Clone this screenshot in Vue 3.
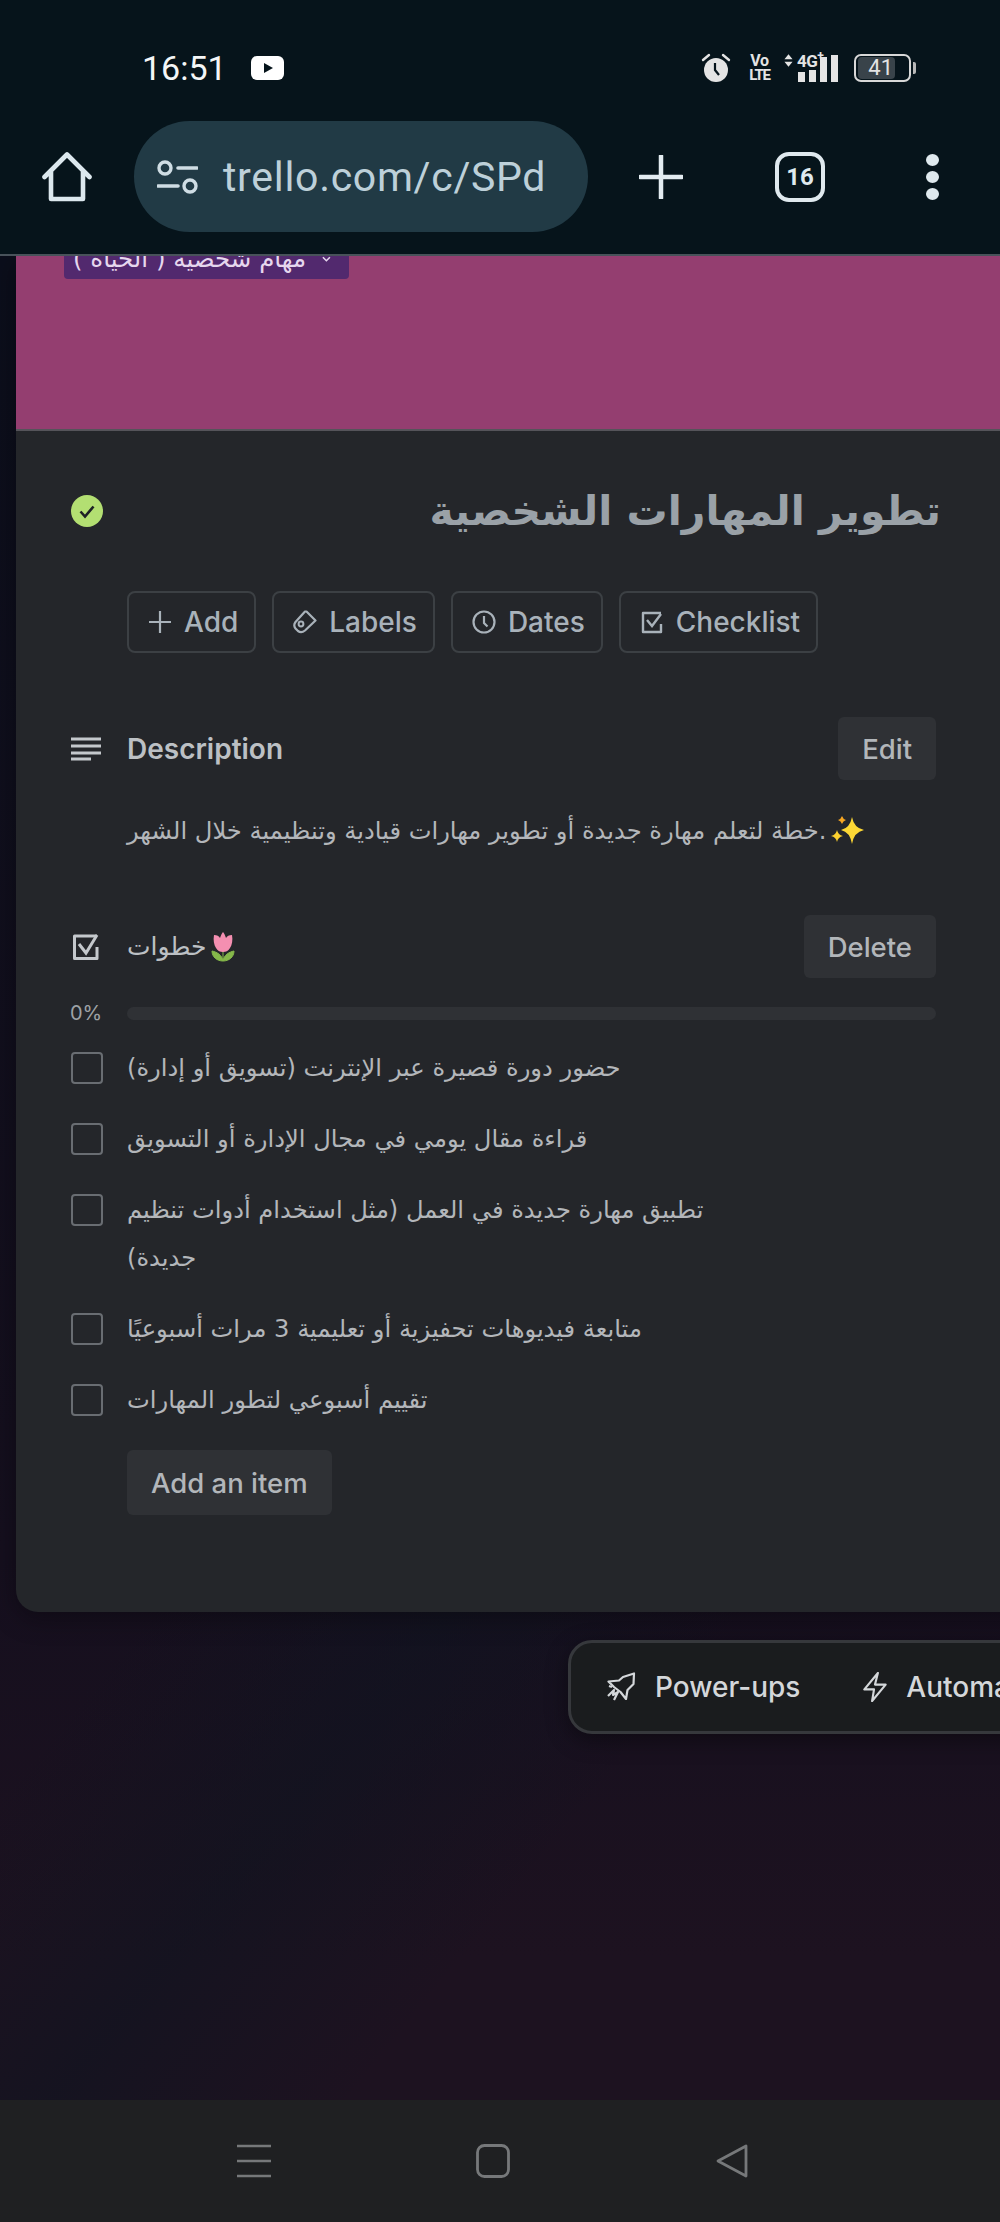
<script setup>
const actions = [
  { label: "Add", icon: "plus" },
  { label: "Labels", icon: "tag" },
  { label: "Dates", icon: "clock" },
  { label: "Checklist", icon: "check" },
];

const items = [
  "حضور دورة قصيرة عبر الإنترنت (تسويق أو إدارة)",
  "قراءة مقال يومي في مجال الإدارة أو التسويق",
  "تطبيق مهارة جديدة في العمل (مثل استخدام أدوات تنظيم جديدة)",
  "متابعة فيديوهات تحفيزية أو تعليمية 3 مرات أسبوعيًا",
  "تقييم أسبوعي لتطور المهارات",
];
</script>

<template>
  <div class="screen">
    <header class="chrome">
      <div class="status">
        <span class="time">16:51</span>
        <svg class="yt" viewBox="0 0 33 24"><rect width="33" height="24" rx="6" fill="#fff" /><path d="M13 7l9 5-9 5z" fill="#06141b" /></svg>
        <div class="status-right">
          <svg class="alarm" viewBox="0 0 30 30">
            <circle cx="15" cy="17" r="12" fill="#e4e4e4" />
            <path d="M14 10v7l4 5" fill="none" stroke="#06141b" stroke-width="2.200" />
            <path d="M2 7l6-5M28 7l-6-5" stroke="#e4e4e4" stroke-width="2.400" stroke-linecap="round" />
          </svg>
          <div class="volte"><span>Vo</span><span>LTE</span></div>
          <div class="signal">
            <svg class="updown" viewBox="0 0 10 14"><path d="M5 0l4.500 5.500h-9zM5 14L.5 8.500h9z" fill="#e4e4e4" /></svg>
            <span class="net">4G<sup>+</sup></span>
            <div class="bars"><i class="b1"></i><i class="b2"></i><i class="b3"></i><i class="b4"></i></div>
          </div>
          <div class="battery"><span class="level">41</span></div>
          <i class="nub"></i>
        </div>
      </div>
      <div class="toolbar">
        <svg class="home" viewBox="0 0 50 50"><path d="M2.500 25L25 2.500 47.500 25M9 19v28h32V19" fill="none" stroke="#dce8ee" stroke-width="4.600" stroke-linejoin="round" stroke-linecap="round" /></svg>
        <div class="url">
          <svg class="tune" viewBox="0 0 41 34">
            <circle cx="8" cy="8" r="6" fill="none" stroke="#cfdde4" stroke-width="3.400" />
            <path d="M21 8h19M1 26h20" stroke="#cfdde4" stroke-width="3.600" stroke-linecap="round" />
            <circle cx="33" cy="26" r="6" fill="none" stroke="#cfdde4" stroke-width="3.400" />
          </svg>
          <span class="url-text">trello.com/c/SPd</span>
        </div>
        <svg class="plus" viewBox="0 0 44 44"><path d="M22 1v42M1 22h42" stroke="#e3ecf1" stroke-width="4.500" stroke-linecap="round" /></svg>
        <div class="tabs">16</div>
        <div class="dots"><i></i><i></i><i></i></div>
      </div>
    </header>

    <main class="page">
      <div class="card">
        <div class="cover">
          <div class="label">
            <span dir="rtl">مهام شخصية ( الحياة )</span>
            <svg class="chev" viewBox="0 0 10 6"><path d="M1 1l4 4 4-4" fill="none" stroke="#e6d7ee" stroke-width="1.800" /></svg>
          </div>
        </div>
        <div class="body">
          <div class="title-row">
            <span class="done">
              <svg viewBox="0 0 32 32"><circle cx="16" cy="16" r="16" fill="#b3df72" /><path d="M9.500 16.500l4.500 5 8.500-10" fill="none" stroke="#1d2125" stroke-width="2.600" /></svg>
            </span>
            <h1 class="title" dir="rtl">تطوير المهارات الشخصية</h1>
          </div>

          <div class="actions">
            <button v-for="a in actions" :key="a.label" class="action">
              <svg v-if="a.icon === 'plus'" class="ai" viewBox="0 0 24 24"><path d="M12 1v22M1 12h22" stroke="#a9b2ba" stroke-width="2.200" /></svg>
              <svg v-else-if="a.icon === 'tag'" class="ai" viewBox="0 0 24 24"><path d="M12 1.500h1.500l9 9L12 20.500c-2.500 2-5 2-7 .5l-2.500-2.500c-1.500-2-1.500-4.500 0-6.500z" fill="none" stroke="#a9b2ba" stroke-width="2.200" stroke-linejoin="round" /><circle cx="8" cy="14" r="2.400" fill="none" stroke="#a9b2ba" stroke-width="2" /></svg>
              <svg v-else-if="a.icon === 'clock'" class="ai" viewBox="0 0 24 24"><circle cx="12" cy="12" r="10.500" fill="none" stroke="#a9b2ba" stroke-width="2.200" /><path d="M12 6v7l3.500 3.500" fill="none" stroke="#a9b2ba" stroke-width="2.200" /></svg>
              <svg v-else class="ai" viewBox="0 0 24 24"><path d="M21 3H3v19h18v-8" fill="none" stroke="#a9b2ba" stroke-width="2.400" stroke-linejoin="round" /><path d="M7 10l5 6 9-12" fill="none" stroke="#a9b2ba" stroke-width="2.400" /></svg>
              <span>{{ a.label }}</span>
            </button>
          </div>

          <div class="head desc-head">
            <svg class="side-icon lines" viewBox="0 0 30 24"><path d="M0 2h30M0 9h30M0 16h30M0 22h20" stroke="#c4c8cc" stroke-width="3.200" /></svg>
            <h2>Description</h2>
            <button class="soft">Edit</button>
          </div>
          <div class="desc">
            <span>خطة لتعلم مهارة جديدة أو تطوير مهارات قيادية وتنظيمية خلال الشهر</span><span class="dot">.</span>
            <svg class="spark" viewBox="0 0 33 30">
              <path d="M21 1Q23 12 33 14 23 16 21 28 19 16 10 14 19 12 21 1z" fill="#fdd835" />
              <path d="M6 14Q7 19 12 20 7 21 6 26 5 21 0 20 5 19 6 14z" fill="#fbd02f" />
              <path d="M11 0Q12 3 15 4 12 5 11 8 10 5 7 4 10 3 11 0z" fill="#f6a623" />
            </svg>
          </div>

          <div class="head check-head">
            <svg class="side-icon" viewBox="0 0 28 28"><path d="M25 3H2.500v22.500H25V14" fill="none" stroke="#c4c8cc" stroke-width="3" stroke-linejoin="round" /><path d="M7 11l7 9 11-18" fill="none" stroke="#c4c8cc" stroke-width="3" /></svg>
            <h2 class="check-title">
              <span>خطوات</span>
              <svg class="tulip" viewBox="0 0 24 30">
                <path d="M12 18v11M12 29C11 23 6 20 1 19c0 6 5 10 11 10zM12 29c1-6 6-9 11-10 0 6-5 10-11 10z" fill="#86b84a" stroke="#86b84a" stroke-width="1" />
                <path d="M3 3c3 0 5 1 6 3 1-3 2-5 3-6 1 1 2 3 3 6 1-2 3-3 6-3 1 5 0 10-2 13-2 3-4 4-7 4s-5-1-7-4C3 13 2 8 3 3z" fill="#f48fb1" />
              </svg>
            </h2>
            <button class="soft">Delete</button>
          </div>

          <div class="progress">
            <span class="pct">0%</span>
            <div class="track"></div>
          </div>

          <ul class="items">
            <li v-for="item in items" :key="item" class="item">
              <span class="box"></span>
              <span class="item-text">{{ item }}</span>
            </li>
          </ul>

          <button class="soft add-item">Add an item</button>
        </div>
      </div>

      <div class="dock">
        <svg class="dock-icon" viewBox="0 0 30 30">
          <path d="M16 5L27 1.500 26.500 12l-6 6-1.500 9-5.500-7L7 15 1.500 9.500 12 8.500z" fill="none" stroke="#d4d7da" stroke-width="2.200" stroke-linejoin="round" />
          <path d="M1 24l6-6-1 5 5-3-4 8M2 14l3 1" fill="none" stroke="#d4d7da" stroke-width="2.200" stroke-linejoin="round" />
        </svg>
        <span class="dock-text">Power-ups</span>
        <svg class="dock-icon bolt" viewBox="0 0 26 31"><path d="M16 1L2 18h10l-2 12 14-17H13z" fill="none" stroke="#d4d7da" stroke-width="2.200" stroke-linejoin="round" /></svg>
        <span class="dock-text">Automation</span>
      </div>
    </main>

    <footer class="nav">
      <svg class="nav-icon" viewBox="0 0 34 34"><path d="M0 2h34M0 17h34M0 32h34" stroke="#76787a" stroke-width="2.600" /></svg>
      <svg class="nav-icon" viewBox="0 0 34 34"><rect x="1.500" y="1.500" width="31" height="31" rx="7" fill="none" stroke="#76787a" stroke-width="2.800" /></svg>
      <svg class="nav-icon" viewBox="0 0 34 34"><path d="M31 2v30L3 17z" fill="none" stroke="#76787a" stroke-width="2.800" stroke-linejoin="round" /></svg>
    </footer>
  </div>
</template>

<style>
html,
body {
  margin: 0;
  background: #1d1220;
}
</style>

<style scoped>
.screen {
  width: 1000px;
  height: 2222px;
  display: flex;
  flex-direction: column;
  overflow: hidden;
  font-family: Inter, "DejaVu Sans", sans-serif;
  color: #b6bcc2;
}
.chrome {
  flex: none;
  height: 254px;
  background: #06141b;
  border-bottom: 2px solid #48525a;
}
.status {
  display: flex;
  align-items: center;
  height: 32px;
  padding: 52px 0 0 142px;
}
.time {
  font: 400 34px Roboto, sans-serif;
  color: #f4f6f7;
}
.yt {
  width: 33px;
  height: 24px;
  margin-left: 24px;
}
.status-right {
  margin-left: auto;
  display: flex;
  align-items: center;
  padding-right: 84px;
  color: #e4e4e4;
}
.alarm {
  width: 30px;
  height: 30px;
}
.volte {
  display: flex;
  flex-direction: column;
  align-items: center;
  width: 21px;
  margin-left: 18px;
  font: 700 15px/14px Roboto, sans-serif;
  letter-spacing: -1.2px;
}
.volte span:first-child {
  font-size: 16px;
  letter-spacing: -0.3px;
}
.signal {
  display: flex;
  align-items: flex-start;
  position: relative;
  width: 56px;
  height: 28px;
  margin-left: 14px;
}
.updown {
  width: 9px;
  height: 13px;
}
.net {
  font: 700 17px/15px Roboto, sans-serif;
  letter-spacing: -0.5px;
  margin-left: 4px;
}
.net sup {
  font-size: 12px;
  line-height: 0;
}
.bars {
  position: absolute;
  right: 2px;
  bottom: 0;
  display: flex;
  align-items: flex-end;
  gap: 4px;
}
.bars i {
  display: block;
  width: 7px;
  background: #e4e4e4;
}
.b1 { height: 10px; }
.b2 { height: 12px; }
.b3 { height: 25px; }
.b4 { height: 27px; }
.battery {
  width: 49px;
  height: 22px;
  margin-left: 14px;
  border: 2px solid #d8d8d8;
  border-radius: 7px;
  padding: 1px 2px;
}
.level {
  display: block;
  width: 37px;
  height: 22px;
  box-sizing: border-box;
  padding-right: 2px;
  background: #39434a;
  border-radius: 4px;
  text-align: right;
  font: 400 22px/22px Roboto, sans-serif;
  color: #e4e4e4;
}
.nub {
  width: 3px;
  height: 12px;
  margin-left: 2px;
  background: #b8b8b8;
  border-radius: 0 2px 2px 0;
}
.toolbar {
  display: flex;
  align-items: center;
  height: 111px;
  margin-top: 37px;
  padding-left: 42px;
}
.home {
  width: 50px;
  height: 50px;
}
.url {
  display: flex;
  align-items: center;
  width: 454px;
  height: 111px;
  margin-left: 42px;
  padding-left: 23px;
  box-sizing: border-box;
  background: #213a45;
  border-radius: 56px;
}
.tune {
  width: 41px;
  height: 34px;
}
.url-text {
  margin-left: 25px;
  font: 400 41px Roboto, sans-serif;
  letter-spacing: 0.7px;
  color: #bdd0d9;
  white-space: nowrap;
}
.plus {
  width: 44px;
  height: 44px;
  margin-left: 51px;
}
.tabs {
  width: 50px;
  height: 50px;
  margin-left: 92px;
  box-sizing: border-box;
  border: 4px solid #dfe9ee;
  border-radius: 14px;
  text-align: center;
  font: 700 24px/42px Roboto, sans-serif;
  color: #dfe9ee;
}
.dots {
  display: flex;
  flex-direction: column;
  gap: 5px;
  margin-left: 101px;
}
.dots i {
  display: block;
  width: 13px;
  height: 12px;
  border-radius: 50%;
  background: #dfe9ee;
}
.page {
  flex: 1;
  min-height: 0;
  padding-left: 16px;
  overflow: hidden;
  background:
    linear-gradient(129deg, transparent 50%, rgba(16, 20, 32, 0.6) 62%, transparent 74%),
    linear-gradient(180deg, #0b0e1b 0, #150f1e 1300px, #1d1220 1700px);
}
.card {
  width: 1100px;
  background: #24262a;
  border-radius: 0 0 0 22px;
  box-shadow: 0 6px 26px rgba(0, 0, 0, 0.35);
  overflow: hidden;
}
.cover {
  height: 173px;
  background: #943e70;
  border-bottom: 2px solid #55545a;
  padding-left: 48px;
  overflow: hidden;
}
.label {
  display: flex;
  align-items: center;
  gap: 16px;
  width: 285px;
  height: 40px;
  margin-top: -17px;
  padding: 0 18px 0 9px;
  box-sizing: border-box;
  background: #52296e;
  border-radius: 4px;
  font: 400 24.500px/40px "DejaVu Sans", sans-serif;
  color: #e6d7ee;
  white-space: nowrap;
}
.label span {
  flex: 1;
}
.chev {
  width: 10px;
  height: 6px;
}
.body {
  width: 865px;
  padding: 50px 0 97px 55px;
}
.title-row {
  display: flex;
  align-items: center;
  height: 60px;
}
.done {
  display: block;
  width: 32px;
  height: 32px;
}
.done svg {
  display: block;
}
.title {
  flex: 1;
  margin: 0 -5px 0 0;
  font: 700 41px/60px "DejaVu Sans", sans-serif;
  color: #9aa1a7;
  text-align: right;
}
.actions {
  display: flex;
  gap: 16px;
  margin-top: 50px;
  padding-left: 56px;
}
.action {
  display: flex;
  align-items: center;
  gap: 12px;
  height: 62px;
  padding: 0 16px 0 19px;
  background: transparent;
  border: 2px solid #3c4044;
  border-radius: 8px;
  font: 500 28px Inter, sans-serif;
  color: #a9b2ba;
}
.ai {
  width: 24px;
  height: 24px;
}
.head {
  display: flex;
  align-items: center;
  height: 63px;
}
.desc-head {
  margin-top: 64px;
}
.check-head {
  margin-top: 64px;
}
.side-icon {
  width: 30px;
  height: 28px;
  flex: none;
  margin-right: 26px;
}
.side-icon.lines {
  height: 24px;
}
.head h2 {
  flex: 1;
  margin: 0;
  font: 600 28px Inter, sans-serif;
  color: #bcc0c4;
}
.soft {
  height: 63px;
  padding: 0 24px;
  background: #2f3135;
  border: 0;
  border-radius: 6px;
  font: 500 27.5px Inter, sans-serif;
  color: #b2b6ba;
}
.desc {
  display: flex;
  align-items: center;
  height: 40px;
  margin-top: 31px;
  padding-left: 56px;
  font: 400 24.2px/40px "DejaVu Sans", sans-serif;
  color: #b3b6ba;
  white-space: nowrap;
}
.spark {
  width: 33px;
  height: 30px;
  margin-left: 5px;
}
.head .check-title {
  display: flex;
  align-items: center;
  gap: 5px;
  font: 400 25px "DejaVu Sans", sans-serif;
}
.tulip {
  width: 24px;
  height: 30px;
}
.progress {
  display: flex;
  align-items: center;
  height: 32px;
  margin-top: 19px;
}
.pct {
  width: 57px;
  margin-left: -1px;
  font: 400 20px Inter, sans-serif;
  color: #9ea2a6;
}
.track {
  width: 809px;
  height: 13px;
  background: #2f3135;
  border-radius: 7px;
}
.items {
  display: flex;
  flex-direction: column;
  gap: 31px;
  margin: 23px 0 0;
  padding: 0;
  list-style: none;
}
.item {
  display: flex;
  align-items: flex-start;
}
.box {
  flex: none;
  width: 32px;
  height: 32px;
  box-sizing: border-box;
  border: 2px solid #696d72;
  border-radius: 4px;
  margin-right: 24px;
}
.item-text {
  width: 590px;
  margin-top: -8px;
  font: 400 24.2px/48px "DejaVu Sans", sans-serif;
  color: #b3b6ba;
}
.add-item {
  display: block;
  height: 65px;
  margin: 26px 0 0 56px;
}
.dock {
  display: flex;
  align-items: center;
  width: 600px;
  height: 94px;
  margin: 28px 0 0 552px;
  padding-left: 36px;
  box-sizing: border-box;
  background: #1a1c1e;
  border: 3px solid #36383c;
  border-radius: 24px;
  box-shadow: 0 6px 22px rgba(0, 0, 0, 0.4);
  font: 500 28px Inter, sans-serif;
  color: #d4d7da;
  white-space: nowrap;
}
.dock-icon {
  flex: none;
  width: 30px;
  height: 30px;
}
.dock-icon.bolt {
  width: 26px;
  margin-left: 62px;
}
.dock-text {
  margin-left: 18px;
}
.nav {
  flex: none;
  display: flex;
  align-items: center;
  gap: 205px;
  height: 122px;
  padding-left: 237px;
  box-sizing: border-box;
  background: #1f2022;
}
.nav-icon {
  width: 34px;
  height: 34px;
}
</style>
